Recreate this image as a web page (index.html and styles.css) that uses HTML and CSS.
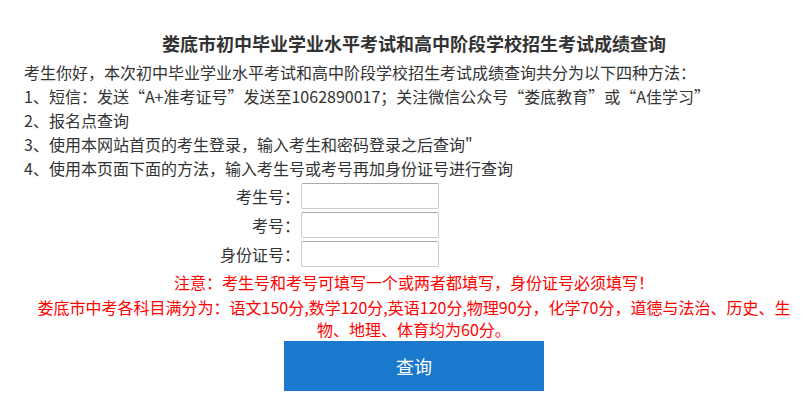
FILE: index.html
```html
<!DOCTYPE html>
<html lang="zh-CN">
<head>
  <meta charset="UTF-8">
  <title>娄底市初中毕业学业水平考试和高中阶段学校招生考试成绩查询</title>
  <link rel="stylesheet" href="styles.css">
</head>
<body>
  <div class="wrap">
    <h1 class="title">娄底市初中毕业学业水平考试和高中阶段学校招生考试成绩查询</h1>
    <div class="info">
      <p>考生你好，本次初中毕业学业水平考试和高中阶段学校招生考试成绩查询共分为以下四种方法：</p>
      <p>1、短信：发送“A+准考证号”发送至1062890017；关注微信公众号“娄底教育”或“A佳学习”</p>
      <p>2、报名点查询</p>
      <p>3、使用本网站首页的考生登录，输入考生和密码登录之后查询"</p>
      <p>4、使用本页面下面的方法，输入考生号或考号再加身份证号进行查询</p>
    </div>
    <form class="query" onsubmit="return false">
      <div class="row"><label for="ksh">考生号：</label><input id="ksh" type="text"></div>
      <div class="row"><label for="kh">考号：</label><input id="kh" type="text"></div>
      <div class="row"><label for="sfz">身份证号：</label><input id="sfz" type="text"></div>
    </form>
    <p class="note">注意：考生号和考号可填写一个或两者都填写，身份证号必须填写！</p>
    <p class="score">娄底市中考各科目满分为：语文150分,数学120分,英语120分,物理90分，化学70分，道德与法治、历史、生物、地理、体育均为60分。</p>
    <button class="btn" type="button">查询</button>
  </div>
</body>
</html>
```

FILE: styles.css
```css
body { margin: 0; font-family: "Noto Sans CJK SC", "Microsoft YaHei", sans-serif; font-size: 16px; color: #333; background: #fff; }
.wrap { margin-left: 18px; width: 792px; }
.title { margin: 31px 0 5px; font-size: 18px; line-height: 24px; font-weight: bold; text-align: center; }
.info { padding-left: 6px; }
.info p { margin: 0; line-height: 24px; }
.query { margin-top: 3px; padding-left: 182px; }
.row { display: flex; align-items: center; margin-bottom: 3px; }
.row label { width: 100px; text-align: right; margin-right: 1px; }
.row input { width: 138px; height: 26px; box-sizing: border-box; border: 1px solid #ccc; border-top-color: #aaa; border-radius: 2px; padding: 2px 4px; }
.note, .score { margin: 0; color: #f00; text-align: center; }
.note { line-height: 24px; }
.score { margin-top: 2px; padding: 0 12px; line-height: 22px; }
.btn { display: block; margin: 1px auto 0; width: 260px; height: 50px; border: none; background: #1a79cc; color: #fff; font-family: inherit; font-size: 18px; cursor: pointer; }
```
